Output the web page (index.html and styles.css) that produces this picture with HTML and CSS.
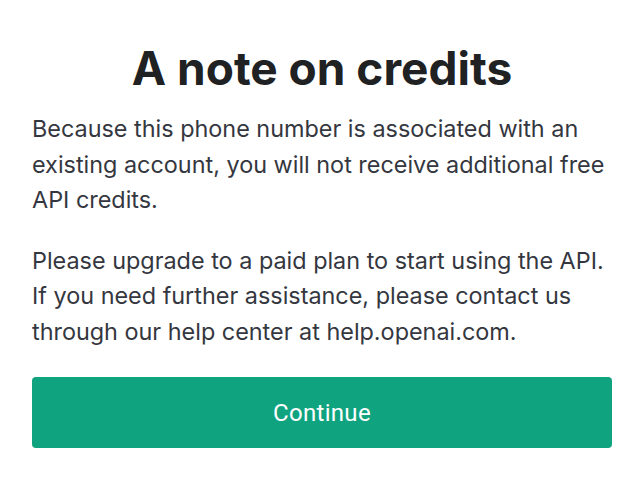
FILE: index.html
```html
<!DOCTYPE html>
<html lang="en">
<head>
    <meta charset="UTF-8">
    <meta name="viewport" content="width=device-width, initial-scale=1.0">
    <title>A note on credits</title>
    <link rel="stylesheet" href="styles.css">
</head>
<body>
    <div class="card">
        <h1>A note on credits</h1>
        <p>Because this phone number is associated with an existing account, you will not receive additional free API credits.</p>
        <p>Please upgrade to a paid plan to start using the API. If you need further assistance, please contact us through our help center at help.openai.com.</p>
        <button type="button" class="continue-btn">Continue</button>
    </div>
</body>
</html>
```

FILE: styles.css
```css
body {
    margin: 0;
    background-color: #ffffff;
    font-family: Inter, "Noto Sans", sans-serif;
}
.card {
    width: 580px;
    margin-left: 32px;
    padding-top: 38px;
}
h1 {
    margin: 0 0 13px;
    text-align: center;
    font-size: 46px;
    font-weight: 700;
    line-height: 60px;
    color: #202123;
}
p {
    margin: 0 0 25px;
    font-size: 23.4px;
    line-height: 35.5px;
    color: #353740;
}
.continue-btn {
    display: block;
    width: 100%;
    height: 71px;
    margin-top: 28px;
    background-color: #10a37f;
    color: #ffffff;
    border: none;
    border-radius: 4px;
    font-family: Roboto, sans-serif;
    font-size: 24px;
    letter-spacing: 0.3px;
    cursor: pointer;
}
```
